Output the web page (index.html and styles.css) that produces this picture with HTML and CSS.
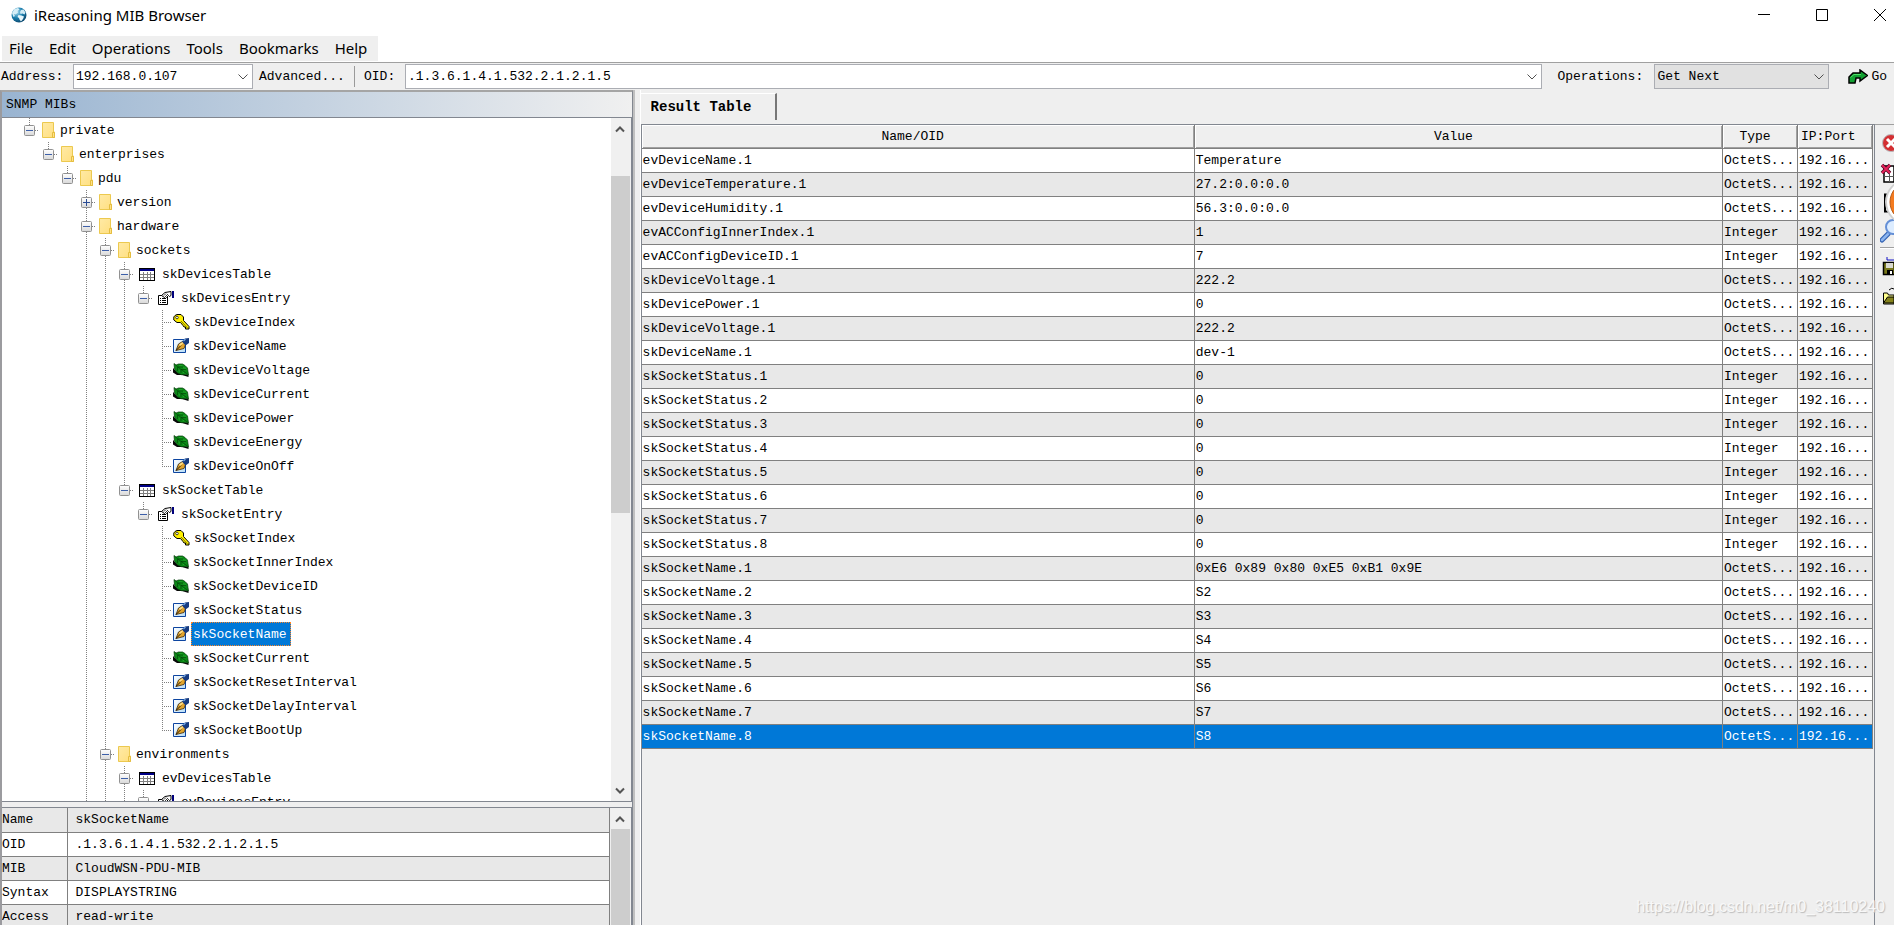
FILE: index.html
```html
<!DOCTYPE html>
<html lang="en">
<head>
<meta charset="utf-8">
<title>iReasoning MIB Browser</title>
<link rel="stylesheet" href="styles.css">
</head>
<body>
<svg class="defs" aria-hidden="true">
  <defs>
    <linearGradient id="boxFill" x1="0" y1="0" x2="0" y2="1"><stop offset="0" stop-color="#fff"/><stop offset="1" stop-color="#d8d8d8"/></linearGradient>
    <linearGradient id="paper" x1="0" y1="0" x2="1" y2="1"><stop offset="0" stop-color="#fff"/><stop offset="1" stop-color="#b5dcf8"/></linearGradient>
    <linearGradient id="folderFill" x1="0" y1="0" x2="1" y2="1"><stop offset="0" stop-color="#ffeaa6"/><stop offset="1" stop-color="#ffdf80"/></linearGradient>
    <radialGradient id="globeFill" cx=".35" cy=".3" r=".8"><stop offset="0" stop-color="#a8dcf0"/><stop offset=".5" stop-color="#1b7fae"/><stop offset="1" stop-color="#0b3f63"/></radialGradient>
  </defs>
  <symbol id="minus" viewBox="0 0 11 11"><rect x=".5" y=".5" width="10" height="10" rx="1" fill="url(#boxFill)" stroke="#919191"/><path d="M2 5.500h7" stroke="#3d5fa8"/></symbol>
  <symbol id="plus" viewBox="0 0 11 11"><rect x=".5" y=".5" width="10" height="10" rx="1" fill="url(#boxFill)" stroke="#919191"/><path d="M2 5.500h7M5.500 2v7" stroke="#2b4c94"/></symbol>
  <symbol id="folder" viewBox="0 0 13 16"><path d="M.5.5h11v9.500h1v5.500H.5z" fill="url(#folderFill)" stroke="#ecc94f"/><path d="M10.500 15.500v-5h2v5z" fill="#ffe288" stroke="#e5bd40"/></symbol>
  <symbol id="table" viewBox="0 0 16 13"><path d="M0 0h16v13H0z" fill="#000"/><path d="M1 1h14v2H1z" fill="#000087"/><path d="M1 3h14v9H1z" fill="#fff"/><path d="M1 6.500h14M1 9.500h14M4.500 4v8M8.500 4v8M11.500 4v8" stroke="#808080"/></symbol>
  <symbol id="entry" viewBox="0 0 16 14"><path d="M.5 4.500h9v9h-9z" fill="#fff" stroke="#000"/><path d="M2 7.500h1M2 9.500h1M2 11.500h1M4 7.500h4M4 9.500h4M4 11.500h4" stroke="#000"/><path d="M3.500 4.500 7 1.500l6-1v4l-1.500 1-1-1-2 2-1-1-1 1z" fill="#fff" stroke="#000"/><path d="m6 4.500 2-2M8 5l2-2" stroke="#000" stroke-width=".8"/><path d="M14 0h2v7h-2z" fill="#00007c"/></symbol>
  <symbol id="key" viewBox="0 0 17 16"><path d="M2 1.500 4 .5h4L10.500 3v3.500l5.500 6v2.500h-3.500v-2h-1.500l-1-1.500-2.500-3H4L.8 6V3z" fill="#ffef00" stroke="#000"/><path d="m8 7 6.500 7" stroke="#7a7800"/><circle cx="4" cy="3.500" r="1.300" fill="#fff" stroke="#000" stroke-width=".7"/></symbol>
  <symbol id="pen" viewBox="0 0 16 16"><path d="M.5 1.500h12v13H.5z" fill="url(#paper)" stroke="#0d45a0"/><path d="M3 12.500 5.500 6l4-2.500 3 3-1.500 4z" fill="#e3a52c" stroke="#3a2508" stroke-width=".8"/><path d="m3 12.500 5-5" stroke="#271a07"/><path d="M6 6.500 9.500 4l1 1L7 8z" fill="#ffe08c"/><path d="M9 3.500 12 .5 16 0v5l-3.500 2.500z" fill="#173b80"/><path d="m10.500 3 2-2" stroke="#71a5e0" stroke-width="1.200"/></symbol>
  <symbol id="leaf" viewBox="0 0 16 14"><path d="M0 5v4.500L4 12h5l6.500 2v-2L5 10z" fill="#080808"/><path d="M1 .5 3 2l2.500-1h4L12 2.500 14.500 5l.5 3.500.5 3.500-3-.5-4 .2-4-1.700L1.500 6z" fill="#0a8a16" stroke="#023906" stroke-width=".7"/><path d="m2.500 2 5 4 7.500 5.500M5 4h5M8 6.500h5M4.500 4v4M8 6.500V10" stroke="#023d06" stroke-width=".6" fill="none"/><path d="m6 2.500 3.500.2M10 4.800l3 .5M6 7l.5 1.500M10 9l1 1.200" stroke="#28a930" stroke-width=".8" fill="none"/></symbol>
  <symbol id="down" viewBox="0 0 10 6"><path d="m.5.5 4.500 4.500 4.500-4.500" fill="none" stroke="#505050"/></symbol>
  <symbol id="scrollUp" viewBox="0 0 10 8"><path d="m1 6.500 4-4 4 4" fill="none" stroke="#555" stroke-width="2"/></symbol>
  <symbol id="scrollDown" viewBox="0 0 10 8"><path d="m1 1.500 4 4 4-4" fill="none" stroke="#555" stroke-width="2"/></symbol>
</svg>

<header class="titlebar">
  <svg class="globe" viewBox="0 0 16 16"><circle cx="8" cy="8" r="7.500" fill="url(#globeFill)"/><path d="M1 6 3.500 2 7 1l1.500 1.500L6.500 4 7 5.500 4.500 7.500 3 7l1 2-1.500 1z" fill="#d5eef7"/><path d="m10 3 2.500-.5 2 3-1 2-2-1-2 .5-.5-2z" fill="#cfeaf5"/><path d="m7.500 8 3 .5 2.500 1-1 2.500-2 2.500-1.500-2-.5-1.500-1.500-1z" fill="#e8f6fb"/></svg>
  <h1 class="title">iReasoning MIB Browser</h1>
  <div class="window-buttons">
    <button class="window-button" aria-label="Minimize"><svg viewBox="0 0 12 12"><path d="M0 5.500h12" stroke="#000"/></svg></button>
    <button class="window-button" aria-label="Maximize"><svg viewBox="0 0 12 12"><path d="M.5.5h11v11H.5z" fill="none" stroke="#000"/></svg></button>
    <button class="window-button" aria-label="Close"><svg viewBox="0 0 12 12"><path d="m0 0 12 12M12 0 0 12" stroke="#000"/></svg></button>
  </div>
</header>

<nav class="menubar">
  <button class="menu">File</button>
  <button class="menu">Edit</button>
  <button class="menu">Operations</button>
  <button class="menu">Tools</button>
  <button class="menu">Bookmarks</button>
  <button class="menu">Help</button>
</nav>

<div class="toolbar">
  <label class="address-label" for="address">Address:</label>
  <div class="combo combo-address"><input id="address" class="field" value="192.168.0.107"><button class="combo-arrow" aria-label="Show addresses"><svg><use href="#down"/></svg></button></div>
  <button class="tool advanced">Advanced...</button>
  <span class="divider"></span>
  <label class="oid-label" for="oid">OID:</label>
  <div class="combo combo-oid"><input id="oid" class="field" value=".1.3.6.1.4.1.532.2.1.2.1.5"><button class="combo-arrow" aria-label="Show OIDs"><svg><use href="#down"/></svg></button></div>
  <label class="operations-label" for="operation">Operations:</label>
  <div class="combo combo-operation"><select id="operation" class="field"><option>Get Next</option></select><span class="combo-arrow select-arrow"><svg><use href="#down"/></svg></span></div>
  <button class="tool go"><svg class="go-icon" viewBox="0 0 20 15"><path d="M1 14V8l4-4h7V1l7.500 5.500L12 12V9H8L7 14z" fill="#12a032" stroke="#000" stroke-width="1.500"/><path d="M2.500 8.500 6 5.500h7" stroke="#4ee066" fill="none"/></svg>Go</button>
</div>

<main class="workspace">
  <section class="left">
    <h2 class="panel-title">SNMP MIBs</h2>
    <div class="tree-pane">
      <div class="tree-view">
        <ul class="tree">
          <li><div class="node"><svg class="toggle"><use href="#minus"/></svg><svg class="folder"><use href="#folder"/></svg><span class="label">private</span></div>
          <ul><li><div class="node"><svg class="toggle"><use href="#minus"/></svg><svg class="folder"><use href="#folder"/></svg><span class="label">enterprises</span></div>
          <ul><li><div class="node"><svg class="toggle"><use href="#minus"/></svg><svg class="folder"><use href="#folder"/></svg><span class="label">pdu</span></div>
          <ul>
            <li><div class="node"><svg class="toggle"><use href="#plus"/></svg><svg class="folder"><use href="#folder"/></svg><span class="label">version</span></div></li>
            <li class="open-ended"><div class="node"><svg class="toggle"><use href="#minus"/></svg><svg class="folder"><use href="#folder"/></svg><span class="label">hardware</span></div>
            <ul>
              <li><div class="node"><svg class="toggle"><use href="#minus"/></svg><svg class="folder"><use href="#folder"/></svg><span class="label">sockets</span></div>
              <ul>
                <li><div class="node"><svg class="toggle"><use href="#minus"/></svg><svg class="table-icon"><use href="#table"/></svg><span class="label">skDevicesTable</span></div>
                <ul><li><div class="node"><svg class="toggle"><use href="#minus"/></svg><svg class="entry-icon"><use href="#entry"/></svg><span class="label">skDevicesEntry</span></div>
                <ul>
                  <li><div class="node leaf"><svg class="key-icon"><use href="#key"/></svg><span class="label">skDeviceIndex</span></div></li>
                  <li><div class="node leaf"><svg class="pen-icon"><use href="#pen"/></svg><span class="label">skDeviceName</span></div></li>
                  <li><div class="node leaf"><svg class="leaf-icon"><use href="#leaf"/></svg><span class="label">skDeviceVoltage</span></div></li>
                  <li><div class="node leaf"><svg class="leaf-icon"><use href="#leaf"/></svg><span class="label">skDeviceCurrent</span></div></li>
                  <li><div class="node leaf"><svg class="leaf-icon"><use href="#leaf"/></svg><span class="label">skDevicePower</span></div></li>
                  <li><div class="node leaf"><svg class="leaf-icon"><use href="#leaf"/></svg><span class="label">skDeviceEnergy</span></div></li>
                  <li><div class="node leaf"><svg class="pen-icon"><use href="#pen"/></svg><span class="label">skDeviceOnOff</span></div></li>
                </ul></li></ul></li>
                <li><div class="node"><svg class="toggle"><use href="#minus"/></svg><svg class="table-icon"><use href="#table"/></svg><span class="label">skSocketTable</span></div>
                <ul><li><div class="node"><svg class="toggle"><use href="#minus"/></svg><svg class="entry-icon"><use href="#entry"/></svg><span class="label">skSocketEntry</span></div>
                <ul>
                  <li><div class="node leaf"><svg class="key-icon"><use href="#key"/></svg><span class="label">skSocketIndex</span></div></li>
                  <li><div class="node leaf"><svg class="leaf-icon"><use href="#leaf"/></svg><span class="label">skSocketInnerIndex</span></div></li>
                  <li><div class="node leaf"><svg class="leaf-icon"><use href="#leaf"/></svg><span class="label">skSocketDeviceID</span></div></li>
                  <li><div class="node leaf"><svg class="pen-icon"><use href="#pen"/></svg><span class="label">skSocketStatus</span></div></li>
                  <li><div class="node leaf"><svg class="pen-icon"><use href="#pen"/></svg><span class="label selected">skSocketName</span></div></li>
                  <li><div class="node leaf"><svg class="leaf-icon"><use href="#leaf"/></svg><span class="label">skSocketCurrent</span></div></li>
                  <li><div class="node leaf"><svg class="pen-icon"><use href="#pen"/></svg><span class="label">skSocketResetInterval</span></div></li>
                  <li><div class="node leaf"><svg class="pen-icon"><use href="#pen"/></svg><span class="label">skSocketDelayInterval</span></div></li>
                  <li><div class="node leaf"><svg class="pen-icon"><use href="#pen"/></svg><span class="label">skSocketBootUp</span></div></li>
                </ul></li></ul></li>
              </ul></li>
              <li class="open-ended"><div class="node"><svg class="toggle"><use href="#minus"/></svg><svg class="folder"><use href="#folder"/></svg><span class="label">environments</span></div>
              <ul><li class="open-ended"><div class="node"><svg class="toggle"><use href="#minus"/></svg><svg class="table-icon"><use href="#table"/></svg><span class="label">evDevicesTable</span></div>
              <ul><li><div class="node"><svg class="toggle"><use href="#minus"/></svg><svg class="entry-icon"><use href="#entry"/></svg><span class="label">evDevicesEntry</span></div></li></ul></li></ul></li>
            </ul></li>
          </ul></li></ul></li></ul></li>
        </ul>
      </div>
      <div class="scrollbar"><button class="scroll-button" aria-label="Scroll up"><svg><use href="#scrollUp"/></svg></button><span class="track-before"></span><span class="thumb"></span><span class="track-after"></span><button class="scroll-button" aria-label="Scroll down"><svg><use href="#scrollDown"/></svg></button></div>
    </div>
    <div class="detail-pane">
      <table class="detail">
        <tbody>
          <tr><th scope="row">Name</th><td>skSocketName</td></tr>
          <tr><th scope="row">OID</th><td>.1.3.6.1.4.1.532.2.1.2.1.5</td></tr>
          <tr><th scope="row">MIB</th><td>CloudWSN-PDU-MIB</td></tr>
          <tr><th scope="row">Syntax</th><td>DISPLAYSTRING</td></tr>
          <tr><th scope="row">Access</th><td>read-write</td></tr>
        </tbody>
      </table>
      <div class="scrollbar"><button class="scroll-button" aria-label="Scroll details up"><svg><use href="#scrollUp"/></svg></button><span class="thumb"></span></div>
    </div>
  </section>

  <div class="splitter"></div>

  <section class="right">
    <div class="tabs"><button class="tab">Result Table</button></div>
    <div class="result-row">
      <div class="result-pane">
        <table class="results">
          <colgroup><col class="col-name"><col class="col-value"><col class="col-type"><col class="col-ip"></colgroup>
          <thead><tr><th scope="col">Name/OID</th><th scope="col">Value</th><th scope="col">Type</th><th scope="col" class="ip-head">IP:Port</th></tr></thead>
          <tbody>
            <tr><td>evDeviceName.1</td><td>Temperature</td><td>OctetS...</td><td>192.16...</td></tr>
            <tr><td>evDeviceTemperature.1</td><td>27.2:0.0:0.0</td><td>OctetS...</td><td>192.16...</td></tr>
            <tr><td>evDeviceHumidity.1</td><td>56.3:0.0:0.0</td><td>OctetS...</td><td>192.16...</td></tr>
            <tr><td>evACConfigInnerIndex.1</td><td>1</td><td>Integer</td><td>192.16...</td></tr>
            <tr><td>evACConfigDeviceID.1</td><td>7</td><td>Integer</td><td>192.16...</td></tr>
            <tr><td>skDeviceVoltage.1</td><td>222.2</td><td>OctetS...</td><td>192.16...</td></tr>
            <tr><td>skDevicePower.1</td><td>0</td><td>OctetS...</td><td>192.16...</td></tr>
            <tr><td>skDeviceVoltage.1</td><td>222.2</td><td>OctetS...</td><td>192.16...</td></tr>
            <tr><td>skDeviceName.1</td><td>dev-1</td><td>OctetS...</td><td>192.16...</td></tr>
            <tr><td>skSocketStatus.1</td><td>0</td><td>Integer</td><td>192.16...</td></tr>
            <tr><td>skSocketStatus.2</td><td>0</td><td>Integer</td><td>192.16...</td></tr>
            <tr><td>skSocketStatus.3</td><td>0</td><td>Integer</td><td>192.16...</td></tr>
            <tr><td>skSocketStatus.4</td><td>0</td><td>Integer</td><td>192.16...</td></tr>
            <tr><td>skSocketStatus.5</td><td>0</td><td>Integer</td><td>192.16...</td></tr>
            <tr><td>skSocketStatus.6</td><td>0</td><td>Integer</td><td>192.16...</td></tr>
            <tr><td>skSocketStatus.7</td><td>0</td><td>Integer</td><td>192.16...</td></tr>
            <tr><td>skSocketStatus.8</td><td>0</td><td>Integer</td><td>192.16...</td></tr>
            <tr><td>skSocketName.1</td><td>0xE6 0x89 0x80 0xE5 0xB1 0x9E</td><td>OctetS...</td><td>192.16...</td></tr>
            <tr><td>skSocketName.2</td><td>S2</td><td>OctetS...</td><td>192.16...</td></tr>
            <tr><td>skSocketName.3</td><td>S3</td><td>OctetS...</td><td>192.16...</td></tr>
            <tr><td>skSocketName.4</td><td>S4</td><td>OctetS...</td><td>192.16...</td></tr>
            <tr><td>skSocketName.5</td><td>S5</td><td>OctetS...</td><td>192.16...</td></tr>
            <tr><td>skSocketName.6</td><td>S6</td><td>OctetS...</td><td>192.16...</td></tr>
            <tr><td>skSocketName.7</td><td>S7</td><td>OctetS...</td><td>192.16...</td></tr>
            <tr class="current"><td>skSocketName.8</td><td>S8</td><td>OctetS...</td><td>192.16...</td></tr>
          </tbody>
        </table>
      </div>
      <aside class="side-tools">
        <button class="side-tool" aria-label="Stop"><svg viewBox="0 0 14 20"><circle cx="11" cy="10" r="8.500" fill="#d32f32" stroke="#b9babd"/><path d="m7 6 8 8M15 6l-8 8" stroke="#fff" stroke-width="3"/></svg></button>
        <button class="side-tool" aria-label="Clear table"><svg viewBox="0 0 14 20"><path d="M4 3h10v16H4z" fill="#fff" stroke="#000" stroke-width="1.500"/><path d="M4 13.500h10M9.500 8v11" stroke="#555"/><path d="m2 2 8 8M10 2l-8 8" stroke="#4e0620" stroke-width="3.500"/><path d="m2 2 8 8M10 2l-8 8" stroke="#e5225a" stroke-width="2"/></svg></button>
        <button class="side-tool" aria-label="Copy"><svg viewBox="0 0 14 20"><path d="M5 1.500h10v17H5z" fill="#eee" stroke="#000" stroke-width="2"/><path d="M8 4v12M11 4v12" stroke="#e2aaa6" stroke-width="2"/></svg></button>
        <button class="side-tool search-tool" aria-label="Find"><svg viewBox="0 0 14 24"><path d="m2 21 6-6" stroke="#3564b3" stroke-width="5" stroke-linecap="round"/><path d="m2 21 6-6" stroke="#8db5ee" stroke-width="2.500" stroke-linecap="round"/><circle cx="13" cy="8" r="7" fill="#dcecff" stroke="#648fd6" stroke-width="2"/></svg></button>
        <span class="side-divider"></span>
        <button class="side-tool" aria-label="Save"><svg viewBox="0 0 14 20"><path d="M7 1v3h7" fill="none" stroke="#1111c4"/><path d="M3.500 6.500h11v12h-11z" fill="#79791b" stroke="#000" stroke-width="1.500"/><path d="M6 7h7v5H6z" fill="#d9d9d0"/><path d="M7 14h6v4H7z" fill="#000"/><path d="M10 15h2v3h-2z" fill="#fff"/></svg></button>
        <button class="side-tool" aria-label="Open"><svg viewBox="0 0 14 20"><path d="M3.500 16V7h4l1 2H14v9H3.500z" fill="#ffff8c" stroke="#000"/><path d="m3.500 17 4-6H14v6z" fill="#84821b" stroke="#000"/><path d="M9 4q3-3 5-1" fill="none" stroke="#000"/></svg></button>
        <svg class="badge" viewBox="0 0 10 46" aria-hidden="true"><circle cx="24" cy="23" r="23" fill="#d0d0d0"/><circle cx="25" cy="23" r="22" fill="#fff"/><circle cx="26" cy="23" r="20" fill="#f47b20" stroke="#b65a17"/></svg>
      </aside>
    </div>
  </section>
</main>
<div class="watermark">https://blog.csdn.net/m0_38110240</div>
</body>
</html>
```

FILE: styles.css
```css
* { box-sizing: border-box; }

body {
  margin: 0;
  height: 100vh;
  overflow: hidden;
  display: flex;
  flex-direction: column;
  position: relative;
  background: #efefef;
  color: #000;
  font: 13px/24px "Liberation Mono", monospace;
}

button, input, select { font: inherit; color: inherit; }
button { border: 0; padding: 0; background: none; }
ul { list-style: none; margin: 0; padding: 0; }
svg { display: block; flex: none; }
.defs { position: absolute; width: 0; height: 0; }

/* Title bar and menus */
.titlebar { display: flex; align-items: center; height: 36px; padding: 0 8px 6px 11px; background: #fff; flex: none; }
.globe { width: 16px; height: 16px; }
.title { margin: 0 auto 0 7px; font: 15px/24px "Noto Sans", sans-serif; }
.window-buttons { display: flex; gap: 46px; }
.window-button svg { width: 12px; height: 12px; }

.menubar { display: flex; align-items: flex-start; height: 26px; flex: none; background: linear-gradient(#efefef, #efefef) 2px 0 / 376px 25px no-repeat #fff; padding-left: 9px; gap: 16px; }
.menu { font: 15px/24px "Noto Sans", sans-serif; }

/* Address toolbar */
.toolbar { display: flex; align-items: center; height: 28px; flex: none; padding: 0 7px 0 1px; border-top: 1px solid #a0a0a0; }
.address-label { width: 72px; }
.combo { position: relative; display: flex; height: 25px; background: #fff; border: 1px solid #abadb3; }
.combo-address { width: 180px; }
.combo-oid { flex: 1; }
.combo-operation { width: 175px; background: #e1e1e1; }
.field { flex: 1; min-width: 0; height: 100%; margin: 0; padding: 0 2px; border: 0; border-radius: 0; background: none; outline: 0; appearance: none; }
.combo-arrow { display: grid; place-items: center; width: 18px; }
.combo-arrow svg { width: 10px; height: 6px; }
.select-arrow { pointer-events: none; }
.advanced { width: 89px; margin-left: 6px; text-align: left; }
.divider { width: 1px; height: 21px; margin: 0 9px 0 6px; background: #9a9a9a; }
.oid-label { width: 41px; }
.operations-label { width: 97px; margin-left: 15px; }
.go { display: flex; align-items: center; gap: 3px; margin-left: 19px; }
.go-icon { width: 20px; height: 15px; }

/* Workspace */
.workspace { flex: 1; min-height: 0; display: grid; grid-template-columns: 33.4% 8px minmax(0, 1fr); }
.left { display: flex; flex-direction: column; min-width: 0; min-height: 0; border-top: 2px solid #a5a5a5; border-left: 2px solid #9b9b9f; border-right: 1px solid #828790; }
.panel-title { margin: 0; height: 26px; flex: none; padding-left: 4px; border-bottom: 1px solid #828790; background: linear-gradient(90deg, #99b4d1, #f0f0f0); font: inherit; line-height: 26px; }
.tree-pane { flex: 1; min-height: 0; display: flex; background: #fff; border-right: 1px solid #828790; border-bottom: 1px solid #828790; }
.tree-view { flex: 1; min-width: 0; overflow: hidden; }
.splitter { border-left: 2px solid #c0c0c0; border-right: 1px solid #fff; }

/* Tree */
.tree { padding-left: 18px; }
.tree li { position: relative; }
.tree ul { padding-left: 19px; }
.tree li::before { content: ""; position: absolute; left: 9px; top: 0; bottom: 0; width: 1px; background: repeating-linear-gradient(#808080 0 1px, transparent 1px 2px); }
.tree li:last-child::before { bottom: auto; height: 12px; }
.tree li.open-ended::before { bottom: 0; height: auto; }
.node { position: relative; display: flex; align-items: center; height: 24px; padding-left: 4px; background: repeating-linear-gradient(90deg, #808080 0 1px, transparent 1px 2px) 9px 12px / 10px 1px no-repeat; }
.toggle { width: 11px; height: 11px; }
.folder { width: 13px; height: 16px; margin: 0 3px 0 7px; }
.table-icon { width: 16px; height: 13px; margin: 0 5px 0 9px; }
.entry-icon { width: 16px; height: 14px; margin: 0 5px 0 9px; }
.leaf { padding-left: 20px; }
.key-icon { width: 17px; height: 16px; margin-right: 2px; }
.pen-icon { width: 16px; height: 16px; margin-right: 2px; }
.leaf-icon { width: 16px; height: 14px; margin-right: 2px; }
.label { height: 24px; padding: 0 1px; border: 1px solid transparent; line-height: 24px; white-space: nowrap; }
.selected { background: #0078d7; border: 1px dotted #ff8728; color: #fff; padding-right: 3px; }

/* Scroll bars */
.scrollbar { width: 20px; flex: none; display: flex; flex-direction: column; background: #f0f0f0; padding-right: 1px; }
.scroll-button { height: 21px; flex: none; display: grid; place-items: center; }
.scroll-button svg { width: 10px; height: 8px; }
.track-before { flex: 37; }
.tree-pane .thumb { flex: 338; }
.track-after { flex: 268; }
.thumb { flex: 1; background: #cdcdcd; }

/* Details of the selected node */
.detail-pane { flex: none; display: flex; margin-top: 5px; border-top: 1px solid #828790; border-right: 1px solid #828790; height: 118px; overflow: hidden; }
.detail { flex: 1; border-collapse: collapse; table-layout: fixed; margin-right: 1px; align-self: flex-start; }
.detail th, .detail td { height: 24px; padding: 0; border-bottom: 1px solid #808080; border-right: 1px solid #808080; line-height: 23px; text-align: left; font-weight: normal; }
.detail th { width: 65px; }
.detail td { padding-left: 8px; }
.detail tr { background: #fff; }
.detail tr:nth-child(odd) { background: #e8e8e8; }

/* Results */
.right { display: flex; flex-direction: column; min-width: 0; min-height: 0; }
.tabs { height: 34px; flex: none; padding-top: 3px; }
.tab { height: 27px; padding: 0 24px 0 10px; border-right: 2px solid #777; border-top: 1px solid #fff; font-size: 14px; font-weight: bold; line-height: 26px; }
.result-row { flex: 1; min-height: 0; display: flex; }
.result-pane { flex: 1; min-width: 0; border: solid #828790; border-width: 1px 1px 0; padding-right: 1px; }
.results { width: 100%; border-collapse: collapse; table-layout: fixed; }
.col-name { width: 44.9%; }
.col-type { width: 75px; }
.col-ip { width: 75px; }
.results th, .results td { height: 24px; padding: 0 0 0 1px; border-right: 1px solid #808080; border-bottom: 1px solid #808080; line-height: 23px; text-align: left; font-weight: normal; white-space: nowrap; overflow: hidden; }
.results th { height: 23px; padding: 1px 10px 0 0; line-height: 22px; text-align: center; background: #efefef; box-shadow: inset 1px 1px #fff, inset -1px -1px #a0a0a0; }
.results .ip-head { text-align: left; padding: 1px 0 0 3px; }
.results tbody tr { background: #fff; }
.results tbody tr:nth-child(even) { background: #e8e8e8; }
.results tbody tr.current { background: #0078d7; color: #fff; }

/* Side tools run off the right edge of the window */
.side-tools { position: relative; width: 19px; flex: none; overflow: hidden; padding: 3px 0 0 5px; border-top: 1px solid #a0a0a0; display: flex; flex-direction: column; }
.side-tool { height: 30px; flex: none; }
.side-tool svg { width: 14px; height: 20px; }
.side-tool.search-tool { height: 26px; }
.side-tool.search-tool svg { height: 24px; }
.side-divider { height: 2px; flex: none; margin: 3px 0 2px; border-top: 1px solid #a0a0a0; border-bottom: 1px solid #fff; }
.badge { position: absolute; right: 0; top: 54px; width: 10px; height: 46px; }

.watermark { position: absolute; right: 9px; bottom: 6px; font: 16px/24px "Liberation Sans", sans-serif; color: #f8f8f8; text-shadow: 1px 1px 1px #bbb; }
```
